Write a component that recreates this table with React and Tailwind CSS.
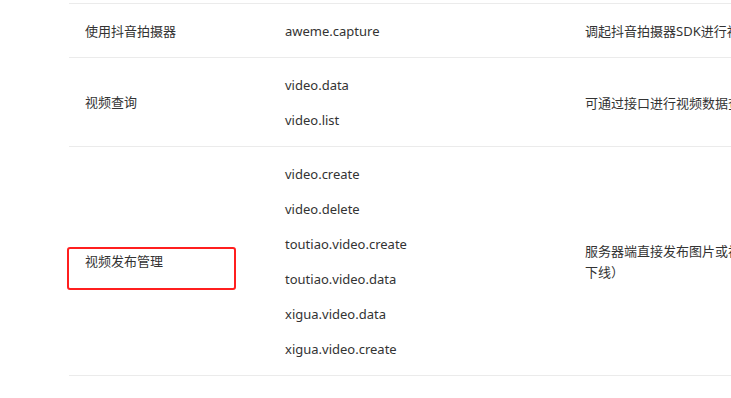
const rows = [
    {
        name: "使用抖音拍摄器",
        scopes: ["aweme.capture"],
        desc: "调起抖音拍摄器SDK进行视频拍摄与发布",
    },
    {
        name: "视频查询",
        scopes: ["video.data", "video.list"],
        desc: "可通过接口进行视频数据查询及视频列表获取",
    },
    {
        name: "视频发布管理",
        scopes: [
            "video.create",
            "video.delete",
            "toutiao.video.create",
            "toutiao.video.data",
            "xigua.video.data",
            "xigua.video.create",
        ],
        desc: "服务器端直接发布图片或视频到抖音，并可对视频进行管理（删除、下线）",
        marked: true,
    },
];

function ScopeRow({ row }) {
    return (
        <div className="flex border-b border-[#ebebeb] pt-[10px] pb-[8px]">
            <div className="relative flex w-[216px] shrink-0 items-center pl-4">
                {row.marked && (
                    // highlight frame around the selected permission
                    <div className="absolute left-[-2px] top-[90px] h-[43px] w-[169px] rounded-[3px] border-2 border-[#ff1f1f]" />
                )}
                <span className="relative">{row.name}</span>
            </div>
            <div className="flex w-[300px] shrink-0 flex-col justify-center">
                {row.scopes.map((s) => (
                    <div key={s} className="flex h-[35px] items-center">
                        {s}
                    </div>
                ))}
            </div>
            <div className="flex w-[394px] shrink-0 items-center leading-[21px]">
                {row.desc}
            </div>
        </div>
    );
}

export default function App() {
    return (
        <div
            className="h-[398px] w-[731px] overflow-hidden bg-white text-[13px] text-[#333]"
            style={{ fontFamily: '"Noto Sans", "Noto Sans CJK SC", sans-serif' }}
        >
            <div className="ml-[69px] mt-[3px] w-[900px] border-t border-[#ebebeb]">
                {rows.map((row) => (
                    <ScopeRow key={row.name} row={row} />
                ))}
            </div>
        </div>
    );
}
